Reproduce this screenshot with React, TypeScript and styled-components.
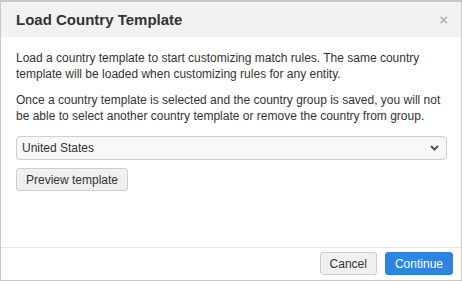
import React from "react";
import styled, { createGlobalStyle } from "styled-components";

const GlobalStyle = createGlobalStyle`
  html, body {
    margin: 0;
    padding: 0;
    background: #ffffff;
  }
  body {
    font-family: "Liberation Sans", Arial, sans-serif;
  }
`;

const Dialog = styled.div`
  box-sizing: border-box;
  width: 462px;
  height: 281px;
  border: 1px solid #c8c8c8;
  border-top-width: 2px;
  display: flex;
  flex-direction: column;
  background: #fff;
  color: #333;
`;

const Header = styled.div`
  height: 35px;
  flex-shrink: 0;
  background: #f2f2f2;
  display: flex;
  align-items: center;
  justify-content: space-between;
  padding: 0 13px 0 15px;
`;

const Title = styled.h1`
  margin: 0;
  font-size: 15px;
  font-weight: bold;
  color: #333;
`;

const Close = styled.button`
  border: none;
  background: transparent;
  padding: 0;
  color: #b4b4b4;
  font-size: 15px;
  font-weight: bold;
  line-height: 1;
  font-family: "Liberation Sans", Arial, sans-serif;
  cursor: pointer;
`;

const Body = styled.div`
  flex: 1;
  padding: 13px 15px 0 15px;
`;

const Paragraph = styled.p`
  margin: 0 0 10px 0;
  white-space: nowrap;
  font-size: 12px;
  line-height: 16px;
  color: #333;
`;

const SelectWrap = styled.div`
  position: relative;
  margin-top: 12px;
  width: 431px;
`;

const Select = styled.select`
  appearance: none;
  -webkit-appearance: none;
  box-sizing: border-box;
  width: 100%;
  height: 24px;
  border: 1px solid #cfcfcf;
  border-radius: 4px;
  background: #f8f8f8;
  padding: 0 0 0 5px;
  font-family: "Liberation Sans", Arial, sans-serif;
  font-size: 12px;
  color: #333;
  outline: none;
`;

const Chevron = styled.svg`
  position: absolute;
  right: 8px;
  top: 9px;
  pointer-events: none;
`;

const Button = styled.button<{ $primary?: boolean }>`
  box-sizing: border-box;
  height: 23px;
  padding: 0 9px;
  border-radius: 3px;
  white-space: nowrap;
  font-family: "Liberation Sans", Arial, sans-serif;
  font-size: 12px;
  border: 1px solid ${(p) => (p.$primary ? "#2a80dc" : "#cfcfcf")};
  background: ${(p) => (p.$primary ? "#2d85e0" : "#f0f0f0")};
  color: ${(p) => (p.$primary ? "#fff" : "#333")};
  cursor: pointer;
`;

const PreviewButton = styled(Button)`
  display: block;
  margin-top: 8px;
`;

const Footer = styled.div`
  flex-shrink: 0;
  border-top: 1px solid #e4e4e4;
  display: flex;
  justify-content: flex-end;
  gap: 8px;
  padding: 4px 8px 5px 0;
`;

export default function App() {
  return (
    <>
      <GlobalStyle />
      <Dialog>
        <Header>
          <Title>Load Country Template</Title>
          <Close aria-label="Close">×</Close>
        </Header>
        <Body>
          <Paragraph>
            Load a country template to start customizing match rules. The same country
            <br />
            template will be loaded when customizing rules for any entity.
          </Paragraph>
          <Paragraph>
            Once a country template is selected and the country group is saved, you will not
            <br />
            be able to select another country template or remove the country from group.
          </Paragraph>
          <SelectWrap>
            <Select defaultValue="us">
              <option value="us">United States</option>
            </Select>
            <Chevron width="9" height="6" viewBox="0 0 9 6">
              <path d="M1 1 L4.5 4.5 L8 1" fill="none" stroke="#555" strokeWidth="2" />
            </Chevron>
          </SelectWrap>
          <PreviewButton>Preview template</PreviewButton>
        </Body>
        <Footer>
          <Button>Cancel</Button>
          <Button $primary>Continue</Button>
        </Footer>
      </Dialog>
    </>
  );
}
